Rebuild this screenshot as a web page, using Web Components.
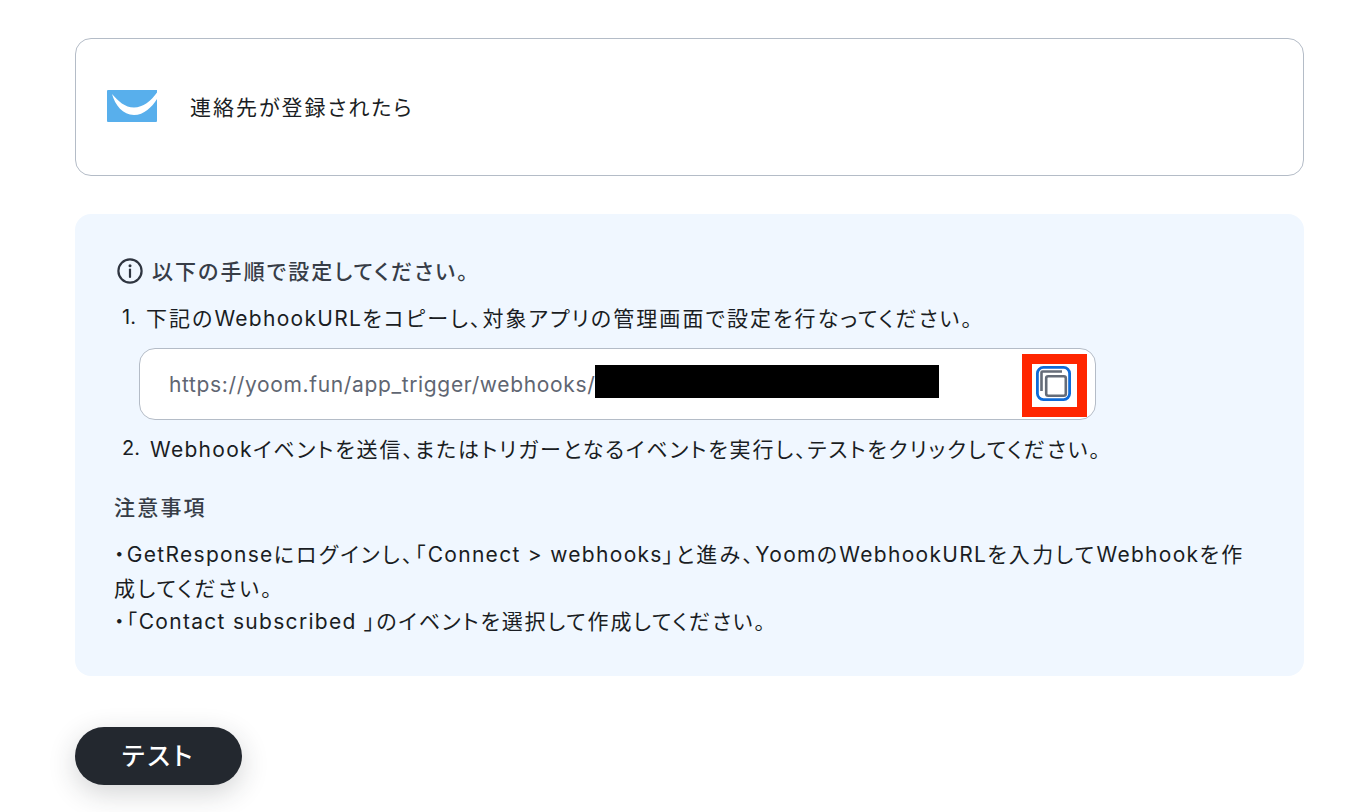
<!DOCTYPE html>
<html lang="ja">
<head>
<meta charset="utf-8">
<title>Webhook</title>
<style>
  html, body { margin: 0; background: #fff; }
  body { font-family: Inter, "Noto Sans CJK JP", sans-serif; color: #1a1d23; }
  app-page { display: block; }
</style>
</head>
<body>
<app-page>
  <trigger-card><ja-text>連絡先が登録されたら</ja-text></trigger-card>
  <info-panel>
    <ja-text slot="title">以下の手順で設定してください。</ja-text>
    <ja-text slot="step1" style="--ja-ls:2.07px">下記のWebhookURLをコピーし、対象アプリの管理画面で設定を行なってください。</ja-text>
    <url-field slot="url" value="https://yoom.fun/app_trigger/webhooks/"></url-field>
    <ja-text slot="step2" style="--ja-ls:1.92px">Webhookイベントを送信、またはトリガーとなるイベントを実行し、テストをクリックしてください。</ja-text>
    <ja-text slot="note-title">注意事項</ja-text>
    <ja-text slot="note" style="--ja-ls:2.3px">・GetResponseにログインし、「Connect &gt; webhooks」と進み、YoomのWebhookURLを入力してWebhookを作</ja-text>
    <ja-text slot="note" style="--ja-ls:2.3px">成してください。</ja-text>
    <ja-text slot="note" style="--ja-ls:1.85px">・「Contact subscribed 」のイベントを選択して作成してください。</ja-text>
  </info-panel>
  <test-button><ja-text>テスト</ja-text></test-button>
</app-page>

<script>
// 和文と欧文で字間が違うので、欧文の連続だけ別の span に分ける
class JaText extends HTMLElement {
  constructor() {
    super();
    this.attachShadow({ mode: "open" });
  }
  connectedCallback() {
    const runs = this.textContent.split(/([\x20-\x7e]+)/).filter(Boolean);
    const style = document.createElement("style");
    style.textContent = `
      :host { display: inline; font-feature-settings: "palt"; font-size: var(--ja-size, 21px); letter-spacing: var(--ja-ls, 1.95px); }
      .la { font-size: 21px; letter-spacing: 1.3px; }`;
    this.shadowRoot.append(style);
    for (const run of runs) {
      const span = document.createElement("span");
      if (/^[\x20-\x7e]/.test(run)) span.className = "la";
      span.textContent = run;
      this.shadowRoot.append(span);
    }
  }
}

class AppPage extends HTMLElement {
  constructor() {
    super();
    this.attachShadow({ mode: "open" });
    this.shadowRoot.innerHTML = `
      <style>
        :host { display: block; }
        .wrap { display: flex; flex-direction: column; height: 812px; box-sizing: border-box; padding: 38px 52px 0 75px; overflow: hidden; }
      </style>
      <div class="wrap"><slot></slot></div>`;
  }
}

class TriggerCard extends HTMLElement {
  constructor() {
    super();
    this.attachShadow({ mode: "open" });
    this.shadowRoot.innerHTML = `
      <style>
        :host { display: block; }
        .card {
          display: flex; align-items: center; gap: 33px;
          height: 138px; box-sizing: border-box; padding: 0 0 0 31px;
          border: 1px solid #b4bcc7; border-radius: 16px; background: #fff;
          --ja-size: 21px; --ja-ls: 2px;
        }
        svg { display: block; width: 50px; height: 32px; flex: none; margin-bottom: 3px; }
        span { margin-bottom: 2px; }
      </style>
      <div class="card">
        <svg viewBox="0 0 50 32">
          <path d="M1 0H50V31a1 1 0 0 1-1 1H1a1 1 0 0 1-1-1V1a1 1 0 0 1 1-1Z" fill="#58afec"/>
          <path d="M5 4C8 15 16 25 27 25C37 25 45 17 50 9V2.5C44 11 36 17.5 27 17.5C18 17.5 11 11 5 4Z" fill="#fff"/>
        </svg>
        <span><slot></slot></span>
      </div>`;
  }
}

class InfoPanel extends HTMLElement {
  constructor() {
    super();
    this.attachShadow({ mode: "open" });
    this.shadowRoot.innerHTML = `
      <style>
        :host { display: block; margin-top: 38px; }
        .panel {
          height: 462px; box-sizing: border-box; padding: 42px 39px 0 39px;
          background: #f0f7ff; border-radius: 16px;
        }
        .title { display: flex; align-items: center; gap: 9px; height: 28px; padding-left: 3px; font-weight: 500; color: #373d47; --ja-ls: 2.1px; }
        .title svg { width: 26px; height: 26px; flex: none; margin-top: 2px; }
        .step { display: flex; height: 28px; align-items: center; margin-top: 19px; padding-left: 8px; white-space: nowrap; }
        .step b { font-weight: 400; font-size: 20px; margin-right: 10px; }
        .url { display: block; margin: 17px 0 0 25px; }
        .step.two { margin-top: 14px; }
        .note-title { margin-top: 32px; height: 28px; line-height: 28px; font-weight: 500; color: #373d47; --ja-ls: 2.2px; }
        .note { margin-top: 16px; line-height: 33.5px; white-space: nowrap; }
        .note ::slotted(*) { display: block; }
      </style>
      <div class="panel">
        <div class="title">
          <svg viewBox="0 0 26 26" fill="none" stroke="#2f3540" stroke-width="2.2">
            <circle cx="13" cy="13" r="11.6"/>
            <path d="M13 11.6V19" stroke-linecap="round"/>
            <circle cx="13" cy="7.8" r="1.5" fill="#2f3540" stroke="none"/>
          </svg>
          <span><slot name="title"></slot></span>
        </div>
        <div class="step"><b>1.</b><span><slot name="step1"></slot></span></div>
        <div class="url"><slot name="url"></slot></div>
        <div class="step two"><b>2.</b><span><slot name="step2"></slot></span></div>
        <div class="note-title"><slot name="note-title"></slot></div>
        <div class="note"><slot name="note"></slot></div>
      </div>`;
  }
}

class UrlField extends HTMLElement {
  constructor() {
    super();
    this.attachShadow({ mode: "open" });
  }
  connectedCallback() {
    const value = this.getAttribute("value");
    this.shadowRoot.innerHTML = `
      <style>
        :host { display: block; }
        .field {
          display: flex; align-items: center; width: 957px; height: 72px; box-sizing: border-box;
          padding-left: 29px; background: #fff; border: 1px solid #b4bcc7; border-radius: 16px;
          font-size: 21px; letter-spacing: 0.65px; color: #5f6672; white-space: nowrap;
        }
        .text { margin-top: 1px; }
        .mask { width: 344px; height: 33px; background: #000; flex: none; margin-bottom: 5px; }
        .copy {
          margin: 3px 8px 0 auto; flex: none; width: 65px; height: 63px; box-sizing: border-box;
          border: 10px solid #ff2600; background: #fff; display: flex; align-items: center; justify-content: center;
        }
        .copy svg { width: 35px; height: 35px; display: block; margin: 0 3px 5px 0; }
      </style>
      <div class="field">
        <span class="text">${value}</span><span class="mask"></span>
        <div class="copy">
          <svg viewBox="0 0 35 35" fill="none">
            <rect x="1.4" y="1.4" width="32.2" height="32.2" rx="6" stroke="#0f6bd8" stroke-width="2.8"/>
            <path d="M5.5 25V6.5a1 1 0 0 1 1-1H26" stroke="#656c78" stroke-width="2.6"/>
            <rect x="10.2" y="10.2" width="19.6" height="19.6" rx="2" stroke="#656c78" stroke-width="2.6"/>
          </svg>
        </div>
      </div>`;
  }
}

class TestButton extends HTMLElement {
  constructor() {
    super();
    this.attachShadow({ mode: "open" });
    this.shadowRoot.innerHTML = `
      <style>
        :host { display: block; margin-top: 51px; width: 167px; }
        button {
          display: block; width: 167px; height: 58px; border: 0; border-radius: 29px; padding: 0 0 5px;
          background: #23282f; color: #fff; font: 500 25px Inter, "Noto Sans CJK JP", sans-serif;
          --ja-size: 25px; --ja-ls: 3px; box-shadow: 0 8px 28px rgba(35, 40, 47, 0.2);
        }
      </style>
      <button><slot></slot></button>`;
  }
}

customElements.define("ja-text", JaText);
customElements.define("app-page", AppPage);
customElements.define("trigger-card", TriggerCard);
customElements.define("info-panel", InfoPanel);
customElements.define("url-field", UrlField);
customElements.define("test-button", TestButton);
</script>
</body>
</html>
